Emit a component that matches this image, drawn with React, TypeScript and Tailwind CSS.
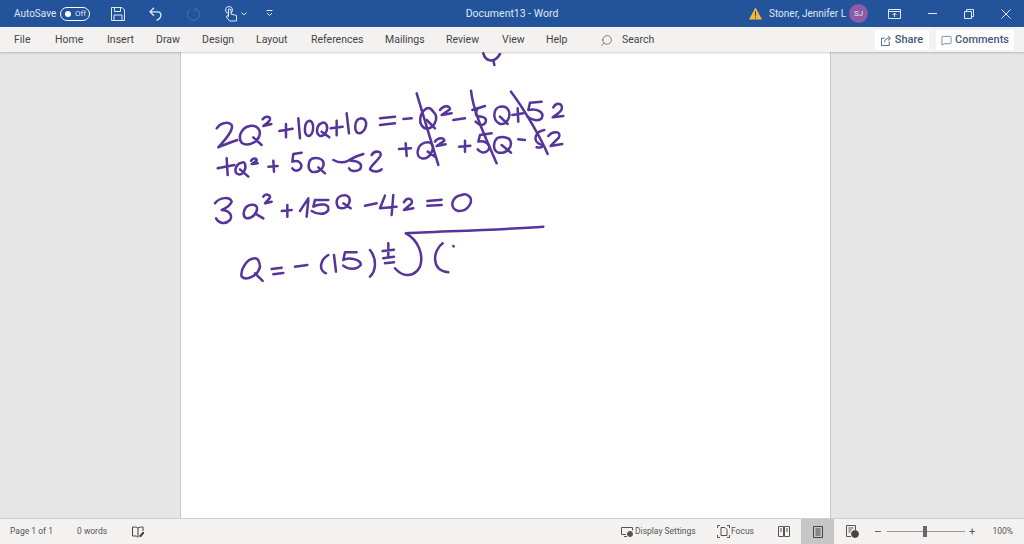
import { MessageSquare, Search } from "lucide-react";

const tabs = [
  { label: "File", width: "w-[41px]" },
  { label: "Home", width: "w-[52px]" },
  { label: "Insert", width: "w-[49px]" },
  { label: "Draw", width: "w-[46px]" },
  { label: "Design", width: "w-[54px]" },
  { label: "Layout", width: "w-[55px]" },
  { label: "References", width: "w-[74px]" },
  { label: "Mailings", width: "w-[61px]" },
  { label: "Review", width: "w-[56px]" },
  { label: "View", width: "w-[44px]" },
  { label: "Help", width: "w-[54px]" },
];

// pen strokes, traced in the 3x zoom coordinates of each region
const inkTop = [
  "M50 235 C60 220 85 212 95 225 C102 240 75 270 55 292 C70 285 90 278 112 270",
  "M150 228 C125 232 112 260 125 278 C140 290 170 280 178 258 C184 238 170 225 150 228 M160 262 L185 285",
  "M188 208 C195 198 212 198 210 208 C208 215 198 222 190 228 L214 222",
  "M238 243 L278 236 M258 222 L258 262",
  "M295 205 L300 265",
  "M328 212 C312 215 310 255 325 258 C342 258 345 212 328 212",
  "M368 218 C350 222 345 250 360 258 C375 260 385 240 380 225 C376 218 372 216 368 218 M365 245 L388 262",
  "M392 235 L428 230 M410 212 L410 256",
  "M440 190 L447 250",
  "M482 205 C462 208 460 250 478 250 C498 248 510 205 482 205",
];

const inkRight = [
  "M295 10 C300 30 325 45 345 12 M325 30 L328 45",
  "M-15 205 L30 200 M-15 225 L30 220",
  "M55 207 L80 205",
  "M95 130 C110 180 140 280 160 345",
  "M125 175 C100 190 100 225 120 235 C145 240 165 205 145 185 C140 178 132 172 125 175 M125 210 L150 235",
  "M165 180 C175 165 195 165 195 178 L170 195 L200 190",
  "M205 210 L240 205",
  "M258 122 C265 190 310 280 335 340",
  "M262 180 L300 168 M278 175 C270 190 268 200 290 200 C310 205 305 225 285 225 L272 215",
  "M345 170 C325 175 320 210 345 222 C365 225 380 200 370 180 C365 170 355 168 345 170 M345 200 L368 222",
  "M382 195 L415 190 M398 175 L400 215",
  "M378 125 C420 180 470 270 488 312",
  "M470 155 L435 158 L430 180 C455 175 480 185 470 205 C460 215 440 210 428 200",
  "M505 172 C515 155 535 160 530 178 C525 190 510 195 503 202 L535 198",
  "M42 297 L78 295 M62 280 L65 318",
  "M120 278 C95 285 90 320 110 325 C135 330 150 295 140 282 C135 276 128 276 120 278 M128 305 L150 320",
  "M150 275 C158 262 178 262 178 272 L155 288 L182 283",
  "M222 290 L256 287 M240 272 L240 305",
  "M320 250 L285 255 L280 275 C300 270 320 285 310 300 C300 312 285 308 278 298",
  "M345 262 C325 265 320 300 340 308 C365 312 385 290 375 270 C370 262 355 260 345 262 M350 285 L378 308",
  "M400 268 L420 270",
  "M478 240 C450 245 445 270 460 280 C475 285 480 295 455 292",
  "M490 258 C505 240 530 245 522 262 L497 288 L532 282",
];

const inkSecond = [
  "M38 85 L88 75 M65 55 L68 105",
  "M110 68 C90 72 85 100 100 103 C115 105 125 85 120 72 C118 66 115 66 110 68 M105 88 L130 110",
  "M138 62 C145 52 155 55 155 62 L140 72 L158 70",
  "M190 80 L218 78 M205 62 L207 95",
  "M290 38 L265 42 L262 65 C285 58 295 75 285 88 C275 95 265 92 262 85",
  "M325 55 C310 58 305 85 320 95 C340 100 360 85 355 65 C350 55 335 52 325 55 M340 82 L360 100",
  "M385 60 C400 68 415 70 430 62 C445 52 465 45 475 42 M438 62 C460 62 475 72 465 88 C450 98 435 92 432 85",
  "M500 45 C510 28 535 35 525 50 C515 65 495 80 495 88 C505 98 525 95 530 88",
];

const inkBottom = [
  "M45 85 C60 65 90 65 95 80 C90 95 75 100 65 105 C85 105 100 120 90 135 C75 150 55 145 48 130",
  "M150 90 C130 95 125 125 140 130 C160 130 175 110 170 95 C165 88 158 88 150 90 M165 115 L190 130",
  "M190 65 C195 55 212 58 210 68 L195 85 L215 80",
  "M245 108 L275 105 M262 90 L262 125",
  "M325 70 C315 85 305 100 300 108 M325 75 L320 125",
  "M385 75 L345 75 L340 95 C360 85 390 85 385 105 C375 122 350 118 335 108",
  "M425 62 C405 68 405 98 425 100 C445 100 455 75 445 65 C440 60 432 60 425 62 M430 85 L452 100",
  "M495 92 L530 85",
  "M555 62 L540 100 L590 95 M580 60 L575 120",
  "M612 82 C620 65 640 70 635 85 L612 105 L640 100",
  "M682 78 L725 74 M682 92 L725 90",
  "M785 60 C755 65 745 100 775 108 C805 110 825 75 805 62 C800 58 790 58 785 60",
  "M618 175 C700 170 900 165 1030 155",
  "M618 175 C655 195 672 240 660 275 C645 305 610 310 585 280",
  "M728 205 C700 225 690 285 745 292",
  "M760 213 L761 214",
  "M165 250 C140 250 120 285 125 305 C140 320 175 300 180 275 C178 255 170 250 165 250 M165 295 L188 318",
  "M215 282 L245 278 M220 298 L250 294",
  "M285 275 L322 270",
  "M385 240 C360 255 355 285 378 295",
  "M402 240 L408 290",
  "M470 232 L435 232 L430 255 C450 245 485 255 482 270 C470 285 445 285 430 272",
  "M510 225 C530 250 530 285 510 305",
  "M548 228 L582 224 M565 205 L565 245 M550 250 L582 245 M555 265 L582 262",
];

function Strokes({ paths, x, y }: { paths: string[]; x: number; y: number }) {
  return (
    <g transform={`translate(${x} ${y}) scale(0.3333)`}>
      {paths.map((d) => (
        <path key={d} d={d} />
      ))}
    </g>
  );
}

function Ink() {
  return (
    <svg
      viewBox="181 52 649 466"
      className="h-full w-full"
      fill="none"
      stroke="#55359a"
      strokeWidth="7.5"
      strokeLinecap="round"
      strokeLinejoin="round"
    >
      <Strokes paths={inkTop} x={200} y={50} />
      <Strokes paths={inkRight} x={385} y={50} />
      <Strokes paths={inkSecond} x={205} y={140} />
      <Strokes paths={inkBottom} x={200} y={175} />
    </svg>
  );
}

function TitleBar() {
  return (
    <div className="grid h-[27px] shrink-0 grid-cols-[1fr_auto_1fr] items-center bg-[#23539b] text-[10px] text-[#dfe8f5]">
      <div className="flex items-center pl-[14px]">
        <span className="w-[46px]">AutoSave</span>
        <div className="flex h-[14px] w-[30px] items-center rounded-full border border-white pl-[4px]">
          <span className="h-[6px] w-[6px] rounded-full bg-white" />
          <span className="ml-[4px] text-[8px] leading-none">Off</span>
        </div>
        <svg viewBox="0 0 14 14" className="ml-[21px] h-[14px] w-[14px]" fill="none" stroke="#dfe8f5">
          <path d="M.5.5h10.5l2.500 2.500v10.500H.5zM3.500.5v4h6v-4M3 13.500V8h8v5.500" />
        </svg>
        <svg viewBox="0 0 14 14" className="ml-[24px] h-[14px] w-[14px]" fill="none" stroke="#dfe8f5" strokeWidth="1.3">
          <path d="M5 .8 1 4.800l4 4M1 4.800h7.500c4.500 0 5 6 -1 8.500" />
        </svg>
        <svg viewBox="0 0 14 14" className="ml-[23px] h-[14px] w-[14px]" fill="none" stroke="#3f6cae" strokeWidth="1.2">
          <path d="M9 1.500A6 6 0 1 1 4 2.500M9 1.500V5" />
        </svg>
        <svg viewBox="0 0 14 16" className="ml-[24px] h-[16px] w-[14px]" fill="none" stroke="#dfe8f5">
          <circle cx="5" cy="4" r="3.500" />
          <path d="M4.500 3v7.500L3 9.500 2.500 11l3 4h7V9.500L7 8V3.500z" fill="#23539b" />
        </svg>
        <svg viewBox="0 0 6 4" className="ml-[3px] h-[4px] w-[6px]" fill="none" stroke="#dfe8f5">
          <path d="M.5.500 3 3 5.500.5" />
        </svg>
        <svg viewBox="0 0 7 7" className="ml-[19px] h-[7px] w-[7px]" fill="none" stroke="#dfe8f5">
          <path d="M.5.500h6M1 3l2.500 2.500L6 3" />
        </svg>
      </div>
      <div className="text-[10.5px]">Document13 - Word</div>
      <div className="flex items-center justify-end">
        <svg viewBox="0 0 14 13" className="h-[13px] w-[13px]">
          <path d="M7 0l7 13H0z" fill="#f5b942" />
          <path d="M6.400 4h1.200v5H6.400zM6.400 10h1.200v1.500H6.400z" fill="#5a3c0a" />
        </svg>
        <span className="ml-[7px] w-[72px] whitespace-nowrap">Stoner, Jennifer L</span>
        <span className="ml-[8px] flex h-[19px] w-[19px] items-center justify-center rounded-full bg-[#8e5ba6] text-[8px]">
          SJ
        </span>
        <svg viewBox="0 0 13 10" className="ml-[20px] h-[10px] w-[13px]" fill="none" stroke="#dfe8f5">
          <path d="M.5.500h12v9H.5zM.5 2.500h12M6.500 8V4M4.500 6l2-2 2 2" />
        </svg>
        <div className="ml-[27px] h-px w-[9px] bg-[#dfe8f5]" />
        <svg viewBox="0 0 10 10" className="ml-[27px] h-[10px] w-[10px]" fill="none" stroke="#dfe8f5">
          <path d="M.5 2.500h7v7h-7zM2.500 2.500v-2h7v7h-2" />
        </svg>
        <svg viewBox="0 0 10 10" className="ml-[27px] mr-[13px] h-[10px] w-[10px]" fill="none" stroke="#dfe8f5">
          <path d="M.5.500l9 9M9.500.500l-9 9" />
        </svg>
      </div>
    </div>
  );
}

function Ribbon() {
  return (
    <div className="z-10 flex h-[25px] shrink-0 items-center bg-[#f3f2f1] pl-[14px] pt-px text-[10.5px] text-[#444444] shadow-[0_1px_2px_rgba(0,0,0,0.2)]">
      {tabs.map((tab) => (
        <span key={tab.label} className={tab.width}>
          {tab.label}
        </span>
      ))}
      <Search className="h-[13px] w-[13px] -scale-x-100 text-[#555555]" strokeWidth={1.3} />
      <span className="ml-[9px]">Search</span>
      <div className="ml-auto mr-[10px] flex items-center gap-[7px] text-[11px] font-medium text-[#43597c]">
        <div className="flex h-[20px] w-[54px] items-center justify-center gap-[3px] bg-white">
          <svg viewBox="0 0 12 12" className="h-[11px] w-[11px]" fill="none" stroke="#43597c">
            <path d="M9 7v4.500H.5v-8H4M4 8c0-3 2-4.500 5-4.500M7.500 1l3 2.500-3 2.500" />
          </svg>
          Share
        </div>
        <div className="flex h-[20px] w-[78px] items-center justify-center gap-[3px] bg-white">
          <MessageSquare className="h-[11px] w-[11px]" strokeWidth={1.5} />
          Comments
        </div>
      </div>
    </div>
  );
}

function StatusBar() {
  return (
    <div className="flex h-[26px] shrink-0 items-center border-t border-[#d0d0d0] bg-[#f3f2f1] text-[8.5px] text-[#555555]">
      <span className="ml-[10px] w-[67px]">Page 1 of 1</span>
      <span className="w-[55px]">0 words</span>
      <svg viewBox="0 0 12 12" className="h-[12px] w-[12px]" fill="none" stroke="#444444">
        <path d="M6 2C4.500 1 2.500 1 .5 1v9h4l1.500 1.500M6 2v9M6 2c1.500-1 3-1 5-1v4" />
        <path d="M7.500 10l3.500-4 1 1-3.500 4z" fill="#444444" />
      </svg>

      <svg viewBox="0 0 13 12" className="ml-auto h-[12px] w-[13px]" fill="none" stroke="#555555">
        <path d="M5 8.500H.5v-7h11v3M3 10.500h3" />
        <circle cx="9" cy="8" r="2.500" fill="#555555" />
      </svg>
      <span className="ml-px w-[82px]">Display Settings</span>
      <svg viewBox="0 0 13 13" className="h-[13px] w-[13px]" fill="none" stroke="#555555">
        <path d="M4 2.500h4l2 2v6H4zM.5 3V.5H3M12.500 3V.5H10M.5 10v2.500H3M12.500 10v2.500H10" />
      </svg>
      <span className="ml-px w-[47px]">Focus</span>
      <svg viewBox="0 0 12 11" className="h-[11px] w-[12px]" fill="none" stroke="#555555">
        <path d="M.5.500h5v10h-5zM6.500.500h5v10h-5zM2 3h2M2 5h2M8 3h2M8 5h2" />
      </svg>
      <div className="ml-[11px] flex h-[25px] w-[33px] items-center justify-center bg-[#c6c6c6]">
        <svg viewBox="0 0 10 12" className="h-[12px] w-[10px]" fill="none" stroke="#444444">
          <path d="M.5.500h9v11h-9zM2.500 3h5M2.500 5h5M2.500 7h5M2.500 9h5" />
        </svg>
      </div>
      <svg viewBox="0 0 13 13" className="ml-[12px] h-[13px] w-[13px]" fill="none" stroke="#555555">
        <path d="M5 11.500H.5V.5h9V5M2.500 3h5M2.500 5h3M2.500 7h2" />
        <circle cx="9" cy="9" r="3.500" fill="#444444" />
      </svg>
      <div className="ml-[16px] h-px w-[6px] bg-[#666666]" />
      <div className="relative ml-[6px] h-px w-[78px] bg-[#999999]">
        <div className="absolute left-[36px] top-[-5px] h-[11px] w-[4px] bg-[#666666]" />
      </div>
      <span className="ml-[4px] w-[22px] text-[11px] leading-none">+</span>
      <span className="mr-[11px] w-[22px] text-right">100%</span>
    </div>
  );
}

export default function App() {
  return (
    <div className="flex h-screen w-full flex-col overflow-hidden bg-[#e6e6e6] font-['Roboto',sans-serif]">
      <TitleBar />
      <Ribbon />
      <div className="flex min-h-0 flex-1 pl-[180px]">
        <div className="h-full w-[651px] border-x border-[#c8c8c8] bg-white">
          <Ink />
        </div>
      </div>
      <StatusBar />
    </div>
  );
}
